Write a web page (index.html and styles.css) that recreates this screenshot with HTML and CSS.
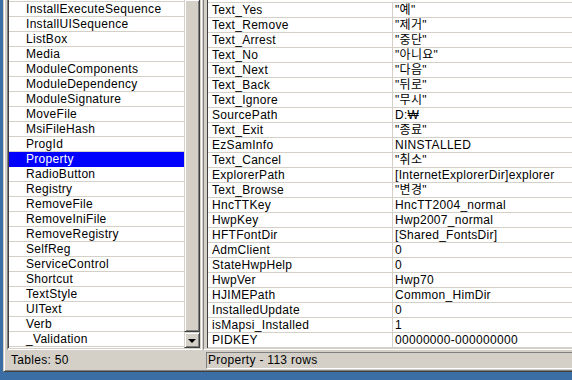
FILE: index.html
```html
<!doctype html>
<html>
<head>
<meta charset="utf-8">
<title>Orca - Property</title>
<link rel="stylesheet" href="styles.css">
</head>

<body>
	<div class="window">
		<div class="panes">
			<div class="tablePane">
				<ul class="tableList">
					<li>InstallExecuteSequence</li>
					<li>InstallUISequence</li>
					<li>ListBox</li>
					<li>Media</li>
					<li>ModuleComponents</li>
					<li>ModuleDependency</li>
					<li>ModuleSignature</li>
					<li>MoveFile</li>
					<li>MsiFileHash</li>
					<li>ProgId</li>
					<li class="selected">Property</li>
					<li>RadioButton</li>
					<li>Registry</li>
					<li>RemoveFile</li>
					<li>RemoveIniFile</li>
					<li>RemoveRegistry</li>
					<li>SelfReg</li>
					<li>ServiceControl</li>
					<li>Shortcut</li>
					<li>TextStyle</li>
					<li>UIText</li>
					<li>Verb</li>
					<li>_Validation</li>
				</ul>
				<div class="vScroll">
					<div class="scrollThumb"></div>
					<div class="scrollBtn"><span class="arrowDown"></span></div>
				</div>
			</div>

			<div class="gridPane">
				<div class="grid">
					<div class="gridRow"><span class="cellKey">Text_Yes</span><span class="cellVal">"예"</span></div>
					<div class="gridRow"><span class="cellKey">Text_Remove</span><span class="cellVal">"제거"</span></div>
					<div class="gridRow"><span class="cellKey">Text_Arrest</span><span class="cellVal">"중단"</span></div>
					<div class="gridRow"><span class="cellKey">Text_No</span><span class="cellVal">"아니요"</span></div>
					<div class="gridRow"><span class="cellKey">Text_Next</span><span class="cellVal">"다음"</span></div>
					<div class="gridRow"><span class="cellKey">Text_Back</span><span class="cellVal">"뒤로"</span></div>
					<div class="gridRow"><span class="cellKey">Text_Ignore</span><span class="cellVal">"무시"</span></div>
					<div class="gridRow"><span class="cellKey">SourcePath</span><span class="cellVal">D:₩</span></div>
					<div class="gridRow"><span class="cellKey">Text_Exit</span><span class="cellVal">"종료"</span></div>
					<div class="gridRow"><span class="cellKey">EzSamInfo</span><span class="cellVal">NINSTALLED</span></div>
					<div class="gridRow"><span class="cellKey">Text_Cancel</span><span class="cellVal">"취소"</span></div>
					<div class="gridRow"><span class="cellKey">ExplorerPath</span><span class="cellVal">[InternetExplorerDir]explorer</span></div>
					<div class="gridRow"><span class="cellKey">Text_Browse</span><span class="cellVal">"변경"</span></div>
					<div class="gridRow"><span class="cellKey">HncTTKey</span><span class="cellVal">HncTT2004_normal</span></div>
					<div class="gridRow"><span class="cellKey">HwpKey</span><span class="cellVal">Hwp2007_normal</span></div>
					<div class="gridRow"><span class="cellKey">HFTFontDir</span><span class="cellVal">[Shared_FontsDir]</span></div>
					<div class="gridRow"><span class="cellKey">AdmClient</span><span class="cellVal">0</span></div>
					<div class="gridRow"><span class="cellKey">StateHwpHelp</span><span class="cellVal">0</span></div>
					<div class="gridRow"><span class="cellKey">HwpVer</span><span class="cellVal">Hwp70</span></div>
					<div class="gridRow"><span class="cellKey">HJIMEPath</span><span class="cellVal">Common_HimDir</span></div>
					<div class="gridRow"><span class="cellKey">InstalledUpdate</span><span class="cellVal">0</span></div>
					<div class="gridRow"><span class="cellKey">isMapsi_Installed</span><span class="cellVal">1</span></div>
					<div class="gridRow"><span class="cellKey">PIDKEY</span><span class="cellVal">00000000-000000000</span></div>
				</div>
			</div>
		</div>

		<div class="statusBar">
			<div class="statusTables">Tables: 50</div>
			<div class="statusRows">Property - 113 rows</div>
		</div>
	</div>
</body>
</html>
```

FILE: styles.css
```css
html, body {
	margin: 0;
	height: 380px;
	overflow: hidden;
}

body {
	background-color: #3a6ea5;
	font-family: "Liberation Sans", "Noto Sans CJK KR", sans-serif;
	font-size: 12px;
	letter-spacing: 0.3px;
	color: #000;
	white-space: nowrap;
}

/* window frame, top and right edges are off screen */
.window {
	margin-left: 3px;
	padding: 0 0 1px 3px;
	background-color: #d4d0c8;
	border-left: 1px solid #d4d0c8;
	border-bottom: 1px solid #404040;
	box-shadow: inset 1px 0 #fff, inset 0 -1px #808080;
	overflow: hidden;
}

.panes {
	display: flex;
	height: 350px;
}

/* left: list of tables */
.tablePane {
	display: flex;
	flex: none;
	width: 195px;
	box-sizing: border-box;
	border-left: 1px solid #808080;
	border-right: 1px solid #fff;
	border-bottom: 1px solid #fff;
	padding: 0 1px 1px 0;
}

.tableList {
	flex: 1;
	margin: 0;
	padding: 1px 0 0 0;
	list-style: none;
	background-color: #fff;
	border-left: 1px solid #404040;
}

.tableList li {
	height: 14px;
	line-height: 14px;
	padding-left: 17px;
	border-bottom: 1px solid #d4d0c8;
}

.tableList li:first-child {
	border-top: 1px solid #d4d0c8;
}

.tableList li.selected {
	background-color: #0000ff;
	border-bottom-color: #0000ff;
	color: #fff;
}

.vScroll {
	display: flex;
	flex-direction: column;
	width: 16px;
}

.scrollThumb,
.scrollBtn {
	box-sizing: border-box;
	background-color: #d4d0c8;
	border: 1px solid;
	border-color: #d4d0c8 #404040 #404040 #d4d0c8;
	box-shadow: inset 1px 1px #fff, inset -1px -1px #808080;
}

.scrollThumb {
	flex: 1;
	border-top: none;
}

.scrollBtn {
	height: 16px;
	display: flex;
	align-items: center;
	justify-content: center;
}

.arrowDown {
	width: 0;
	height: 0;
	margin-top: 1px;
	border-left: 4px solid transparent;
	border-right: 4px solid transparent;
	border-top: 4px solid #000;
}

/* right: rows of the selected table */
.gridPane {
	flex: 1;
	min-width: 0;
	margin-left: 1px;
	padding: 0 0 1px 3px;
	border-left: 1px solid #808080;
	border-bottom: 1px solid #fff;
}

.grid {
	height: 100%;
	box-sizing: border-box;
	padding-top: 2px;
	background-color: #fff;
	border-left: 1px solid #404040;
	overflow: hidden;
}

.gridRow {
	display: grid;
	grid-template-columns: 185px 1fr;
	height: 14px;
	line-height: 14px;
	border-bottom: 1px solid #d4d0c8;
}

.gridRow:first-child {
	border-top: 1px solid #d4d0c8;
}

.cellKey {
	padding-left: 4px;
	border-right: 1px solid #d4d0c8;
}

.cellVal {
	padding-left: 2px;
}

/* status bar */
.statusBar {
	display: flex;
	gap: 3px;
	height: 20px;
	box-sizing: border-box;
	padding-top: 2px;
}

.statusTables {
	flex: none;
	width: 196px;
	padding-left: 4px;
	box-sizing: border-box;
	line-height: 16px;
}

.statusRows {
	flex: 1;
	height: 17px;
	box-sizing: border-box;
	padding-left: 1px;
	line-height: 14px;
	border: 1px solid;
	border-color: #808080 #fff #fff #808080;
	border-right: none;
}
```
